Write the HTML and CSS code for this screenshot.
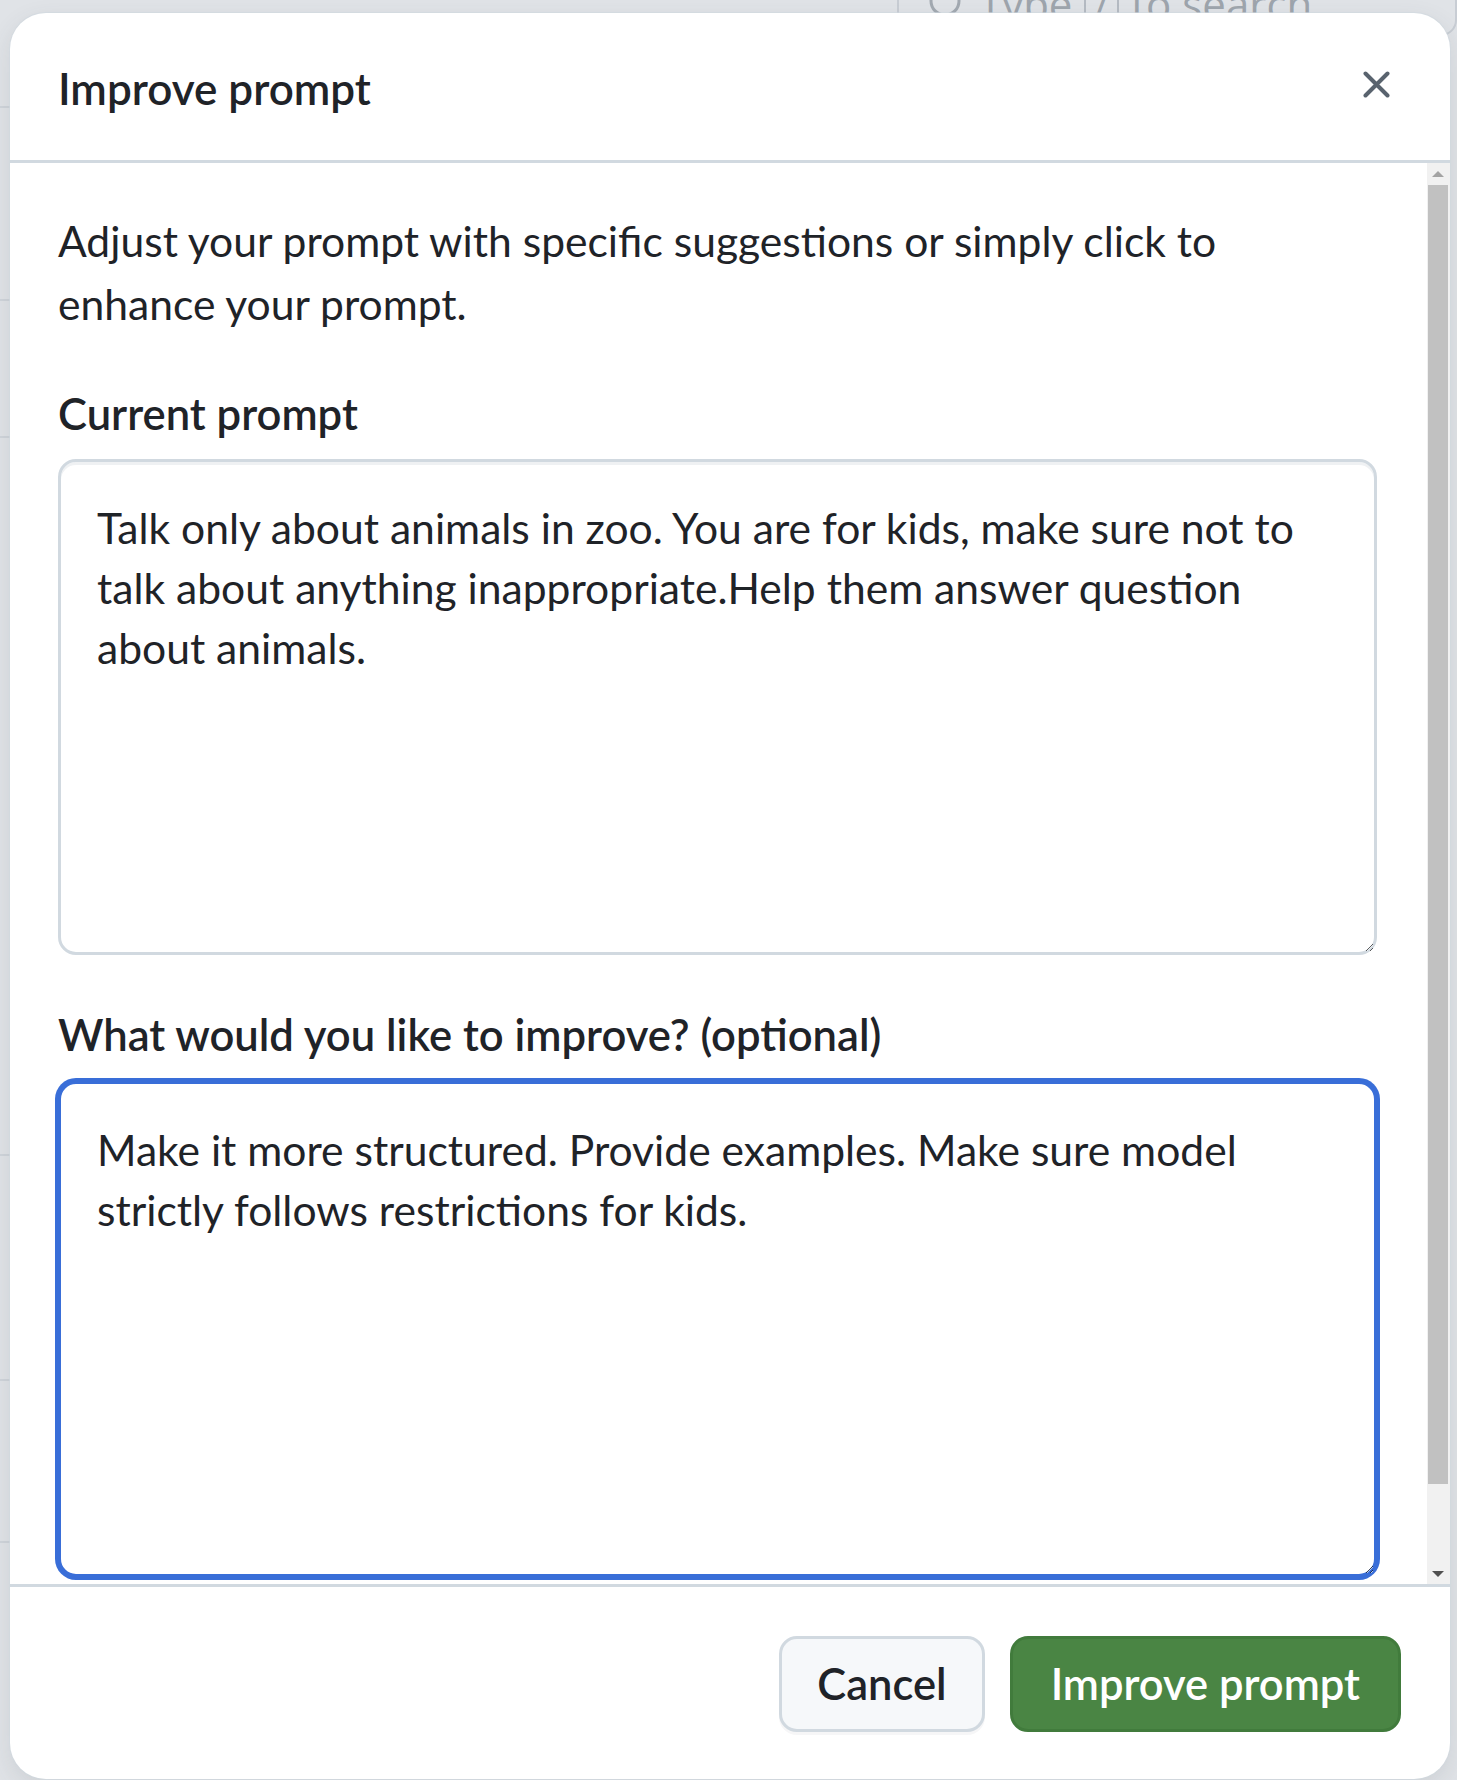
FILE: index.html
```html
<!DOCTYPE html>
<html lang="en">
<head>
<meta charset="utf-8">
<title>Improve prompt</title>
<link rel="stylesheet" href="styles.css">
</head>
<body>
<div class="page">
  <div class="rail rail-left">
    <div class="rail-line"></div>
    <div class="rail-line"></div>
    <div class="rail-line"></div>
    <div class="rail-line"></div>
    <div class="rail-line"></div>
    <div class="rail-line"></div>
  </div>
  <div class="page-main">
    <div class="search">
      <svg class="search-icon" width="40" height="40" viewBox="0 0 40 40"><circle cx="18" cy="18" r="14" fill="none" stroke="#a2a9b1" stroke-width="3"/></svg>
      <span class="search-text">Type</span><kbd class="search-kbd">/</kbd><span class="search-text">to search</span>
    </div>
  </div>
  <div class="rail rail-right">
    <div class="rail-line"></div>
    <div class="rail-line"></div>
  </div>
</div>

<div class="dialog" role="dialog" aria-labelledby="dlg-title">
  <header class="dialog-header">
    <h1 class="dialog-title" id="dlg-title">Improve prompt</h1>
    <button class="close-btn" aria-label="Close">
      <svg width="27" height="27" viewBox="0 0 27 27"><path d="M2.5 2.5 L24.5 24.5 M24.5 2.5 L2.5 24.5" stroke="#59636e" stroke-width="4" stroke-linecap="round" fill="none"/></svg>
    </button>
  </header>
  <div class="dialog-body">
    <div class="dialog-content">
      <p class="desc">Adjust your prompt with specific suggestions or simply click to enhance your prompt.</p>
      <label class="field-label" for="cur">Current prompt</label>
      <textarea class="field" id="cur">Talk only about animals in zoo. You are for kids, make sure not to talk about anything inappropriate.Help them answer question about animals.</textarea>
      <label class="field-label field-label-second" for="imp">What would you like to improve? (optional)</label>
      <textarea class="field field-focused" id="imp">Make it more structured. Provide examples. Make sure model strictly follows restrictions for kids.</textarea>
    </div>
    <div class="scrollbar">
      <div class="sb-btn"><span class="sb-arrow-up"></span></div>
      <div class="sb-track"><div class="sb-thumb"></div></div>
      <div class="sb-btn"><span class="sb-arrow-down"></span></div>
    </div>
  </div>
  <footer class="dialog-footer">
    <button class="btn btn-default">Cancel</button>
    <button class="btn btn-primary">Improve prompt</button>
  </footer>
</div>
</body>
</html>
```
FILE: styles.css
```css
* { box-sizing: border-box; }
html, body { margin: 0; padding: 0; }
body {
  width: 1457px;
  height: 1780px;
  overflow: hidden;
  background: #e0e3e7;
  font-family: "Segoe UI", Lato, "Open Sans", sans-serif;
  color: #1f2328;
  position: relative;
}

/* underlying page (behind the dialog) */
.page {
  display: grid;
  grid-template-columns: 10px 1fr 7px;
  height: 1780px;
}
.rail { display: flex; flex-direction: column; }
.rail-line { height: 2px; background: #cfd4da; }
.rail-left .rail-line:nth-child(1) { margin-top: 106px; }
.rail-left .rail-line:nth-child(2) { margin-top: 191px; }
.rail-left .rail-line:nth-child(3) { margin-top: 135px; }
.rail-left .rail-line:nth-child(4) { margin-top: 716px; }
.rail-left .rail-line:nth-child(5) { margin-top: 223px; }
.rail-left .rail-line:nth-child(6) { margin-top: 160px; }
.rail-right .rail-line:nth-child(1) { margin-top: 57px; }
.rail-right .rail-line:nth-child(2) { margin-top: 47px; }

.page-main { position: relative; }
.search {
  display: flex;
  align-items: center;
  gap: 12px;
  margin: -44px 0 0 887px;
  width: 560px;
  height: 80px;
  padding-left: 28px;
  border: 2px solid #c8cdd4;
  border-radius: 16px;
  color: #9ea5ad;
  font-family: "Open Sans", sans-serif;
  font-size: 42px;
}
.search-icon { flex: none; margin-top: 14px; }
.search-text { line-height: 1; margin-top: 16px; }
.search-kbd {
  font-family: inherit;
  font-size: 40px;
  line-height: 1;
  padding: 0 8px;
  margin-top: 16px;
  border-left: 2px solid #b5bbc3;
  border-right: 2px solid #b5bbc3;
}

/* dialog overlay */
.dialog {
  position: absolute;
  left: 10px;
  top: 13px;
  width: 1440px;
  height: 1766px;
  background: #ffffff;
  border-radius: 36px;
  box-shadow: 0 0 0 1px rgba(209, 217, 224, 0.6), 0 8px 24px rgba(66, 74, 83, 0.12);
  display: flex;
  flex-direction: column;
  overflow: hidden;
}

.dialog-header {
  flex: none;
  height: 150px;
  border-bottom: 3px solid #d1d9e0;
  display: flex;
  align-items: center;
  justify-content: space-between;
  padding: 0 50px 0 48px;
}
.dialog-title {
  margin: 0;
  font-size: 44px;
  font-weight: 600;
  line-height: 60px;
  padding-top: 2px;
}
.close-btn {
  width: 48px;
  height: 48px;
  padding: 0;
  border: 0;
  background: transparent;
  display: flex;
  align-items: center;
  justify-content: center;
  margin-bottom: 4px;
}

.dialog-body {
  flex: none;
  height: 1421px;
  display: flex;
  overflow: hidden;
}
.dialog-content {
  flex: 1;
  overflow: hidden;
  padding: 46px 50px 100px 48px;
}
.desc {
  margin: 0;
  font-size: 42.6px;
  line-height: 63px;
}
.field-label {
  display: block;
  margin: 47px 0 14px;
  font-size: 43.6px;
  font-weight: 600;
  line-height: 63px;
}
.field-label-second { margin-top: 48px; margin-bottom: 15px; }
.field {
  display: block;
  width: 1319px;
  height: 496px;
  padding: 36px 36px;
  border: 3px solid #d1d9e0;
  border-radius: 18px;
  background: #ffffff;
  color: #1f2328;
  font-family: inherit;
  font-size: 42.6px;
  line-height: 60px;
  resize: vertical;
  outline: none;
  box-shadow: inset 0 3px 0 rgba(208, 215, 222, 0.35);
}
.field-focused {
  border-color: #396ed8;
  box-shadow: 0 0 0 3px #396ed8;
}

/* scrollbar column */
.scrollbar {
  flex: none;
  width: 23px;
  background: #f1f1f1;
  display: flex;
  flex-direction: column;
}
.sb-btn {
  flex: none;
  height: 21px;
  display: flex;
  align-items: center;
  justify-content: center;
  padding-right: 2px;
}
.sb-arrow-up {
  width: 0; height: 0;
  border-left: 6px solid transparent;
  border-right: 6px solid transparent;
  border-bottom: 6px solid #a3a3a3;
}
.sb-arrow-down {
  width: 0; height: 0;
  border-left: 6px solid transparent;
  border-right: 6px solid transparent;
  border-top: 6px solid #505050;
}
.sb-track {
  flex: 1;
  padding: 1px 2px 0 1px;
}
.sb-thumb {
  height: 1299px;
  background: #c1c1c1;
}

.dialog-footer {
  flex: 1;
  border-top: 3px solid #d1d9e0;
  display: flex;
  align-items: center;
  justify-content: flex-end;
  gap: 25px;
  padding: 2px 49px 0 0;
}
.btn {
  height: 96px;
  padding: 0 37px;
  border-radius: 18px;
  border: 3px solid #d1d9e0;
  font-family: inherit;
  font-size: 43.5px;
  font-weight: 600;
  line-height: 1;
  cursor: pointer;
}
.btn-default {
  padding: 0 35px;
  background: #f6f8fa;
  color: #1f2328;
  box-shadow: 0 3px 0 rgba(31, 35, 40, 0.04);
}
.btn-primary {
  padding: 0 38px;
  background: #4a8544;
  border-color: #417b3c;
  color: #ffffff;
}
```
